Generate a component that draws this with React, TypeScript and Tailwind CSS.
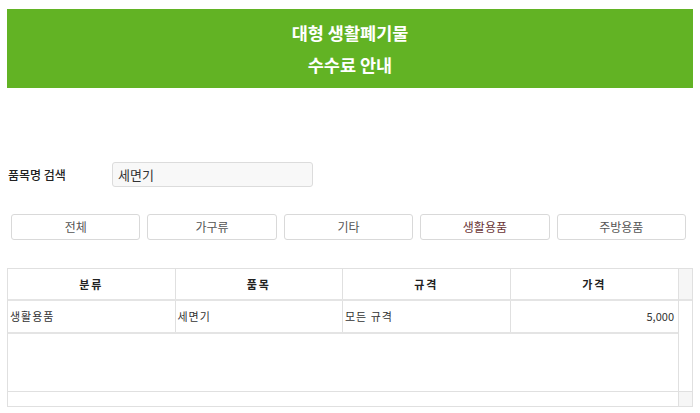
import React from "react";

const font = { fontFamily: '"Noto Sans CJK KR", "Noto Sans", sans-serif' };

export default function App() {
  const cats = ["전체", "가구류", "기타", "생활용품", "주방용품"];
  return (
    <div className="w-[700px] h-[413px] bg-white overflow-hidden" style={font}>
      <div className="pt-[9px] px-[7px]">
        <div className="h-[79px] bg-[#62b324] flex flex-col items-center justify-center text-white font-bold text-[17.5px]">
          <div className="leading-[32px]">대형 생활폐기물</div>
          <div className="leading-[32px]">수수료 안내</div>
        </div>
      </div>

      <div className="mt-[74px] flex items-center pl-[8px]">
        <div className="w-[104px] text-[12px] font-medium text-[#222]">품목명 검색</div>
        <div className="w-[201px] h-[25px] bg-[#f8f8f8] border border-[#dcdcdc] rounded-[3px] flex items-center pl-[5px] text-[13px] text-[#333]">
          세면기
        </div>
      </div>

      <div className="mt-[27px] ml-[11px] mr-[14px] grid grid-cols-5 gap-[7px]">
        {cats.map((c) => (
          <div
            key={c}
            className={`h-[26px] border border-[#d9d9d9] rounded-[3px] bg-white flex items-center justify-center text-[12px] ${
              c === "생활용품" ? "text-[#6a3434]" : "text-[#555]"
            }`}
          >
            {c}
          </div>
        ))}
      </div>

      <div className="mt-[28px] mx-[7px] h-[139px] border border-[#e0e0e0] flex">
        <div className="flex-1 flex flex-col">
          <div className="h-[32px] grid grid-cols-4 border-b-[2px] border-[#e4e4e4] text-[11px] font-bold text-[#222]">
            {["분류", "품목", "규격", "가격"].map((h, i) => (
              <div
                key={h}
                className={`flex items-center justify-center tracking-[2px] ${i < 3 ? "border-r border-[#e0e0e0]" : ""}`}
              >
                {h}
              </div>
            ))}
          </div>
          <div className="h-[33px] grid grid-cols-4 border-b-[2px] border-[#e4e4e4] text-[11px] text-[#333]">
            <div className="flex items-center pl-[2px] tracking-[1px] border-r border-[#e0e0e0]">생활용품</div>
            <div className="flex items-center pl-[2px] tracking-[1px] border-r border-[#e0e0e0]">세면기</div>
            <div className="flex items-center pl-[2px] tracking-[1px] border-r border-[#e0e0e0]">모든 규격</div>
            <div className="flex items-center justify-end pr-[4px]">5,000</div>
          </div>
          <div className="flex-1" />
          <div className="h-[15px] border-t border-[#e0e0e0]" />
        </div>
        <div className="w-[14px] border-l border-[#e0e0e0] flex flex-col">
          <div className="h-[32px] bg-[#f6f6f6] border-b-[2px] border-[#e4e4e4]" />
          <div className="flex-1" />
          <div className="h-[15px] bg-[#f6f6f6] border-t border-[#e0e0e0]" />
        </div>
      </div>
    </div>
  );
}
